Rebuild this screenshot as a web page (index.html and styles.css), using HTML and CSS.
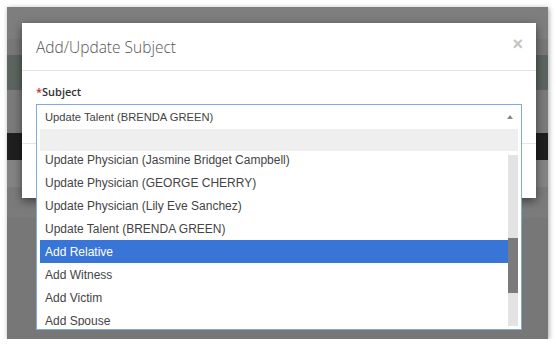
FILE: index.html
```html
<!doctype html>
<html>
  <head>
    <meta charset="UTF-8">
    <title>Add/Update Subject</title>
    <link rel="stylesheet" href="styles.css">
  </head>
  <body>
    <div class="screen">
      <div class="page">
        <div class="band b1"></div>
        <div class="band b2"></div>
        <div class="band b3"></div>
        <div class="band b4"></div>
        <div class="band b5"></div>
        <div class="band b6"></div>
        <div class="band b7"></div>
        <div class="band b8"></div>
      </div>

      <div class="modal">
        <div class="modal-header">
          <h4 class="modal-title">Add/Update Subject</h4>
          <span class="close">&times;</span>
        </div>
        <div class="modal-body">
          <label class="field-label"><span class="req">*</span>Subject</label>
          <div class="combo">
            <div class="combo-head">
              <span class="combo-value">Update Talent (BRENDA GREEN)</span>
              <span class="caret-up"></span>
            </div>
            <div class="drop">
              <div class="drop-search"></div>
              <div class="drop-list">
                <div class="options">
                  <ul class="scrolled">
                    <li>Update Physician (Jasmine Bridget Campbell)</li>
                    <li>Update Physician (GEORGE CHERRY)</li>
                    <li>Update Physician (Lily Eve Sanchez)</li>
                    <li>Update Talent (BRENDA GREEN)</li>
                    <li class="active">Add Relative</li>
                    <li>Add Witness</li>
                    <li>Add Victim</li>
                    <li>Add Spouse</li>
                  </ul>
                </div>
                <div class="scrollbar">
                  <div class="thumb"></div>
                </div>
              </div>
            </div>
          </div>
        </div>
        <div class="modal-footer"></div>
      </div>
    </div>
  </body>
</html>
```

FILE: styles.css
```css
body{
  margin: 0;
  background: #fff;
  font-family: "Open Sans", "Liberation Sans", sans-serif;
}
.screen{
  position: relative;
  margin: 7px 0 0 7px;
  width: 541px;
  height: 332px;
  overflow: hidden;
  box-shadow: 1px 1px 5px rgba(0,0,0,0.35);
}
.page{
  display: flex;
  flex-direction: column;
  height: 100%;
  background: #777;
}
.band{ flex: none; }
.b1{ height: 32px; background: #7e7e7e; }
.b2{ height: 16px; background: #787878; }
.b3{ height: 35px; background: #5c655f; }
.b4{ height: 43px; background: #7b7b7b; }
.b5{ height: 27px; background: #1f1f1f; }
.b6{ height: 27px; background: #848484; }
.b7{ height: 31px; background: #7b7b7b; }
.b8{ flex: 1; background: #777; }

/* modal */
.modal{
  position: absolute;
  left: 15px;
  top: 16px;
  width: 514px;
  background: #fff;
  box-shadow: 0 3px 9px rgba(0,0,0,0.5);
}
.modal-header{
  display: flex;
  align-items: center;
  justify-content: space-between;
  height: 47px;
  padding: 0 13px 0 14px;
  border-bottom: 1px solid #e5e5e5;
}
.modal-title{
  margin: 0;
  font-size: 15.5px;
  font-weight: 300;
  color: #555;
}
.close{
  font-family: "Liberation Sans", sans-serif;
  font-size: 18px;
  font-weight: bold;
  color: #c4c4c4;
  line-height: 1;
  margin-top: -5px;
}
.modal-body{
  padding: 13px 14px 15px;
}
.field-label{
  display: block;
  height: 16px;
  line-height: 16px;
  font-size: 11px;
  font-weight: 600;
  color: #333;
}
.req{ color: #c9302c; }
.modal-footer{
  height: 54px;
  border-top: 1px solid #e5e5e5;
}

/* combo box */
.combo{
  position: relative;
  margin-top: 4px;
  font-family: "Liberation Sans", Arial, sans-serif;
  font-size: 12px;
  color: #444;
}
.combo-head{
  display: flex;
  align-items: center;
  justify-content: space-between;
  height: 23px;
  padding: 0 8px;
  border: 1px solid #7ea9e1;
  border-bottom: none;
  background: #fff;
}
.combo-value{ font-size: 11.2px; }
.caret-up{
  width: 0;
  height: 0;
  border-left: 3px solid transparent;
  border-right: 3px solid transparent;
  border-bottom: 4px solid #888;
}
.drop{
  position: absolute;
  top: 100%;
  left: 0;
  right: 0;
  padding: 1px 3px 3px;
  border: 1px solid #7ea9e1;
  border-top: none;
  background: #fff;
}
.drop-search{
  height: 22px;
  background: #efefef;
}
.drop-list{
  display: flex;
  height: 174px;
  margin-top: 1px;
}
.options{
  flex: 1;
  overflow: hidden;
}
.options ul{
  list-style: none;
  margin: 0;
  padding: 0;
}
.scrolled{ margin-top: -4px !important; }
.options li{
  height: 22px;
  line-height: 22px;
  padding: 1px 0 0 5px;
  white-space: nowrap;
}
.options li.active{
  background: #3875d7;
  color: #fff;
}
.scrollbar{
  width: 10px;
  margin-top: 3px;
  background: #e3e3e3;
}
.thumb{
  margin-top: 83px;
  height: 55px;
  background: #7b7b7b;
}
```
